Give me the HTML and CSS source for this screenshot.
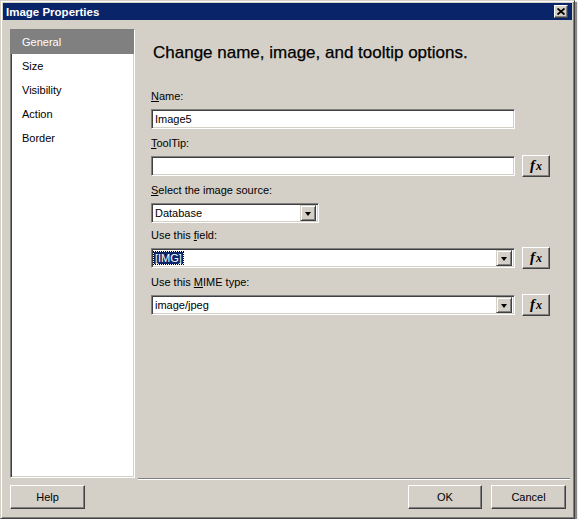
FILE: index.html
```html
<!DOCTYPE html>
<html>
<head>
<meta charset="utf-8">
<title>Image Properties</title>
<link rel="stylesheet" href="styles.css">
</head>
<body>
<div class="window">
  <div class="titlebar">
    <span class="title">Image Properties</span>
    <span class="close"><svg width="8" height="7" viewBox="0 0 8 7"><path d="M0.5 0.5L7.5 6.5M7.5 0.5L0.5 6.5" stroke="#000" stroke-width="1.8" fill="none"/></svg></span>
  </div>
  <div class="main">
    <ul class="nav">
      <li class="active">General</li>
      <li>Size</li>
      <li>Visibility</li>
      <li>Action</li>
      <li>Border</li>
    </ul>
    <div class="pane">
      <div class="content">
        <h1 class="heading">Change name, image, and tooltip options.</h1>
        <div class="group">
          <div class="label"><u>N</u>ame:</div>
          <div class="row"><div class="field wide"><span class="value">Image5</span></div></div>
        </div>
        <div class="group">
          <div class="label"><u>T</u>oolTip:</div>
          <div class="row"><div class="field wide"></div><button class="fx"><i>f</i><i class="x">x</i></button></div>
        </div>
        <div class="group tight">
          <div class="label"><u>S</u>elect the image source:</div>
          <div class="row"><div class="field combo short"><span class="value">Database</span><span class="drop"><span class="arrow"></span></span></div></div>
        </div>
        <div class="group">
          <div class="label">Use this <u>f</u>ield:</div>
          <div class="row"><div class="field combo wide"><span class="value"><span class="selected">[IMG]</span></span><span class="drop"><span class="arrow"></span></span></div><button class="fx"><i>f</i><i class="x">x</i></button></div>
        </div>
        <div class="group">
          <div class="label">Use this <u>M</u>IME type:</div>
          <div class="row"><div class="field combo wide"><span class="value">image/jpeg</span><span class="drop"><span class="arrow"></span></span></div><button class="fx"><i>f</i><i class="x">x</i></button></div>
        </div>
      </div>
      <div class="separator"></div>
    </div>
  </div>
  <div class="footer">
    <button class="btn">Help</button>
    <div class="actions">
      <button class="btn ok">OK</button>
      <button class="btn">Cancel</button>
    </div>
  </div>
</div>
</body>
</html>
```
FILE: styles.css
```css
html, body {
  margin: 0;
  padding: 0;
  background: #ffffff;
}

.window {
  width: 575px;
  height: 519px;
  box-sizing: border-box;
  background: #d4d0c8;
  border: 1px solid;
  border-color: #d4d0c8 #404040 #404040 #d4d0c8;
  box-shadow: inset 1px 1px #ffffff, inset -1px -1px #808080, 2px 2px 1px #8a8a8a;
  padding: 2px;
  display: flex;
  flex-direction: column;
  font: 11px "Liberation Sans", Arial, sans-serif;
  color: #000;
}

.titlebar {
  height: 17px;
  background: #0a246a;
  display: flex;
  align-items: center;
  justify-content: space-between;
  padding: 0 4px 0 3px;
}

.title {
  color: #fff;
  font-weight: bold;
  font-size: 11.5px;
}

.close {
  width: 14px;
  height: 13px;
  box-sizing: border-box;
  background: #d4d0c8;
  border: 1px solid;
  border-color: #ffffff #404040 #404040 #ffffff;
  box-shadow: inset -1px -1px #808080;
  display: flex;
  align-items: center;
  justify-content: center;
}

.close svg { display: block; }

.main {
  display: flex;
  align-items: flex-start;
  padding: 9px 2px 0 7px;
}

.nav {
  list-style: none;
  margin: 0;
  padding: 0;
  width: 125px;
  height: 449px;
  box-sizing: border-box;
  background: #fff;
  border: 1px solid;
  border-color: #808080 #ffffff #ffffff #808080;
  box-shadow: inset 1px 1px #404040, inset -1px -1px #d4d0c8;
}

.nav li {
  height: 24px;
  line-height: 24px;
  padding-left: 11px;
}

.nav li.active {
  background: #808080;
  color: #fff;
}

.pane {
  flex: 1;
  margin-left: 3px;
  height: 451px;
  display: flex;
  flex-direction: column;
}

.content {
  flex: 1;
  padding: 14px 0 0 13px;
}

.heading {
  margin: 0 0 27px 2px;
  font-size: 17px;
  font-weight: normal;
  line-height: 20px;
  -webkit-text-stroke: 0.25px #000;
}

.group {
  margin-bottom: 7px;
}

.group.tight {
  margin-bottom: 5px;
}

.label {
  line-height: 13px;
  height: 13px;
  margin-bottom: 5px;
}

.row {
  display: flex;
  align-items: center;
  gap: 7px;
  height: 22px;
}

.field {
  height: 20px;
  box-sizing: border-box;
  background: #fff;
  border: 1px solid;
  border-color: #808080 #ffffff #ffffff #808080;
  box-shadow: inset 1px 1px #404040, inset -1px -1px #d4d0c8;
  display: flex;
  align-items: center;
  padding: 0 2px 0 3px;
}

.field.wide { width: 364px; }
.field.short { width: 168px; }

.field.combo {
  padding-right: 2px;
}

.value {
  flex: 1;
  line-height: 14px;
}

.selected {
  background: #0a246a;
  color: #fff;
  outline: 1px dotted #000;
  padding: 0 1px;
  margin-left: -1px;
}

.drop {
  width: 16px;
  height: 16px;
  box-sizing: border-box;
  background: #d4d0c8;
  border: 1px solid;
  border-color: #d4d0c8 #404040 #404040 #d4d0c8;
  box-shadow: inset 1px 1px #ffffff, inset -1px -1px #808080;
  display: flex;
  align-items: center;
  justify-content: center;
}

.arrow {
  width: 0;
  height: 0;
  border-left: 3.5px solid transparent;
  border-right: 3.5px solid transparent;
  border-top: 4px solid #000;
  margin-top: 1px;
}

.fx {
  width: 28px;
  height: 22px;
  box-sizing: border-box;
  margin: 0;
  padding: 0 0 2px 0;
  background: #d4d0c8;
  border: 1px solid;
  border-color: #ffffff #404040 #404040 #ffffff;
  box-shadow: inset -1px -1px #808080;
  font: bold italic 15px "Liberation Serif", "Times New Roman", serif;
  color: #000;
  display: flex;
  align-items: center;
  justify-content: center;
}

.fx i { font-style: italic; }
.fx .x { font-size: 12px; margin-left: 1px; position: relative; top: 1px; }

.separator {
  height: 0;
  border-top: 1px solid #808080;
  border-bottom: 1px solid #ffffff;
}

.footer {
  display: flex;
  justify-content: space-between;
  padding: 5px 6px 0 7px;
}

.actions {
  display: flex;
  gap: 9px;
}

.btn {
  width: 75px;
  height: 24px;
  box-sizing: border-box;
  margin: 0;
  padding: 0;
  background: #d4d0c8;
  border: 1px solid;
  border-color: #ffffff #404040 #404040 #ffffff;
  box-shadow: inset -1px -1px #808080;
  font: 11px "Liberation Sans", Arial, sans-serif;
  color: #000;
}

.btn.ok { width: 74px; }
```
